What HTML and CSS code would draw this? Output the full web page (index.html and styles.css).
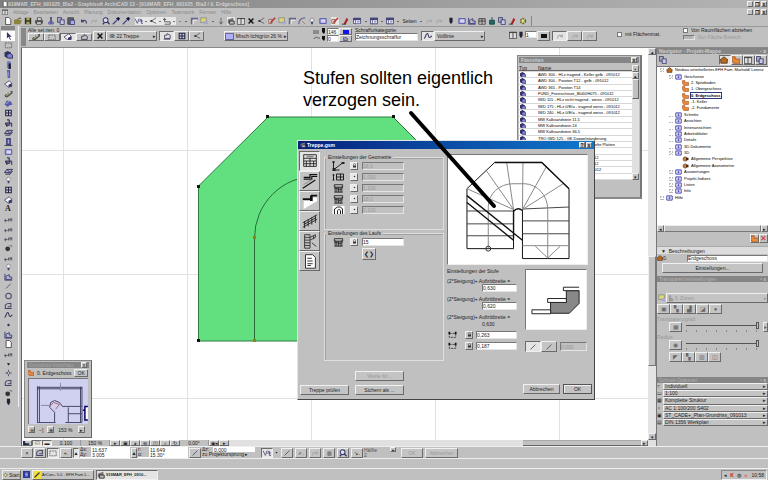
FILE: index.html
```html
<!DOCTYPE html>
<html lang="de">
<head>
<meta charset="utf-8">
<title>ArchiCAD</title>
<link rel="stylesheet" href="styles.css">
</head>
<body>
<svg class="sprite" aria-hidden="true">
<symbol id="new" viewBox="0 0 10 10"><path d="M2 .5h4l2.500 2.500v6.500H2z" fill="#fff" stroke="#333"/></symbol>
<symbol id="open" viewBox="0 0 10 10"><path d="M0 3h3l1-1h3v2h3L8 9H0z" fill="#8a8440"/><path d="M6 1l3 1" stroke="#333"/></symbol>
<symbol id="save" viewBox="0 0 10 10"><path d="M1 1h8v8H1z" fill="#33351c"/><path d="M3 1h4v3H3zM3 6h4v3H3z" fill="#aaa86a"/></symbol>
<symbol id="print" viewBox="0 0 10 10"><path d="M3 1h5v3H3z" fill="#fff" stroke="#333"/><path d="M0 4h10v4H0z" fill="#555"/><path d="M2 6h6v3H2z" fill="#eee" stroke="#333"/></symbol>
<symbol id="cut" viewBox="0 0 10 10"><path d="M4 0l2 6M6 0L4 6" stroke="#335" fill="none"/><circle cx="3.500" cy="7.500" r="1.500" fill="none" stroke="#339"/><circle cx="6.500" cy="7.500" r="1.500" fill="none" stroke="#339"/></symbol>
<symbol id="copy" viewBox="0 0 10 10"><path d="M.5.500h5v6h-5z" fill="#aab" stroke="#336"/><path d="M4 3.500h5v6H4z" fill="#c8c8e8" stroke="#336"/></symbol>
<symbol id="paste" viewBox="0 0 10 10"><path d="M1 1h7v8H1z" fill="#667" stroke="#333"/><path d="M4 4h5.500v5.500H4z" fill="#aae" stroke="#336"/></symbol>
<symbol id="undo" viewBox="0 0 10 10"><path d="M2 3v3h3M2 6c2-3 6-3 6 2" fill="none" stroke="#336" stroke-width="1.300"/></symbol>
<symbol id="redo" viewBox="0 0 10 10"><path d="M8 3v3H5M8 6C6 3 2 3 2 8" fill="none" stroke="#a8a8a8" stroke-width="1.300"/></symbol>
<symbol id="lens" viewBox="0 0 10 10"><circle cx="4.500" cy="4" r="3" fill="#dde" stroke="#336" stroke-width="1.300"/><path d="M6.500 6l3 3M1 9l2-2" stroke="#336" stroke-width="1.600"/></symbol>
<symbol id="pick" viewBox="0 0 10 10"><path d="M1 9l5-5" stroke="#448" stroke-width="1.600"/><path d="M5 2l3 3 2-3-2-2z" fill="#114"/></symbol>
<symbol id="brush" viewBox="0 0 10 10"><path d="M0 0h10v10H0z" fill="#f0e040"/><path d="M2 8l6-6" stroke="#223" stroke-width="1.600"/></symbol>
<symbol id="snap" viewBox="0 0 10 10"><path d="M0 2l3 6 2-6M5 5h5M6 3h2v5h2" fill="none" stroke="#447"/></symbol>
<symbol id="net" viewBox="0 0 10 10"><path d="M9 1L3 5l6 3M1 5h3" fill="none" stroke="#555"/><circle cx="3" cy="5" r="1.200" fill="#333"/></symbol>
<symbol id="ruler" viewBox="0 0 10 10"><path d="M2 1v5h7v3H2M0 3h4" fill="none" stroke="#444"/></symbol>
<symbol id="caret" viewBox="0 0 10 10"><path d="M3 4h4L5 7z" fill="#111"/></symbol>
<symbol id="corner" viewBox="0 0 10 10"><path d="M2 9V2h8" fill="none" stroke="#668" stroke-width="2"/><path d="M4 9V4h5" fill="none" stroke="#fff"/></symbol>
<symbol id="layer" viewBox="0 0 10 10"><path d="M1 1h7v6H1z" fill="#ddd86a" stroke="#888"/><path d="M5 5h5v4H5z" fill="#aac"/></symbol>
<symbol id="down" viewBox="0 0 10 10"><path d="M5 1v7M3 6l2 3 2-3" fill="none" stroke="#555"/></symbol>
<symbol id="stack" viewBox="0 0 10 10"><path d="M1 3l7-2v5l-7 2z" fill="#777"/><path d="M3 5h6v4H3z" fill="#bbb" stroke="#222"/></symbol>
<symbol id="table" viewBox="0 0 10 10"><path d="M.5 1.500h9v8h-9z" fill="#ddd" stroke="#444"/><path d="M0 2h10M5 2v7" stroke="#333"/></symbol>
<symbol id="cross" viewBox="0 0 10 10"><path d="M2 2l6 6M8 2L2 8" stroke="#111" stroke-width="1.800"/></symbol>
<symbol id="arc" viewBox="0 0 10 10"><path d="M1 9c0-5 3-8 8-8" fill="none" stroke="#669" stroke-width="1.500"/><path d="M5 5l4 4" stroke="#a66"/></symbol>
<symbol id="red" viewBox="0 0 10 10"><path d="M1 3h4v5H1z" fill="#eed" stroke="#855"/><path d="M3 7l6-6" stroke="#b33" stroke-width="2"/></symbol>
<symbol id="pen" viewBox="0 0 10 10"><path d="M3 9l4-8 2 2-3 6z" fill="#a22"/><path d="M1 9h5" stroke="#333"/></symbol>
<symbol id="win" viewBox="0 0 10 10"><path d="M.5 1.500h9v7h-9z" fill="#eef" stroke="#336"/><path d="M0 1h10v3H0z" fill="#447"/><path d="M3 4v5M5 6h3" stroke="#558"/></symbol>
<symbol id="plan" viewBox="0 0 10 10"><path d="M1 2h8v6H1z" fill="#aad" stroke="#44a"/><path d="M3 4h5M3 6h5" stroke="#fff"/></symbol>
<symbol id="word" viewBox="0 0 10 10"><path d="M0 0h10v10H0z" fill="#2838a0"/><path d="M3 3h4M3 5h4M3 7h4" stroke="#dde"/></symbol>
<symbol id="dark" viewBox="0 0 10 10"><path d="M3 1h4v5L5 9 3 6z" fill="#223"/></symbol>
<symbol id="tree" viewBox="0 0 10 10"><path d="M5 0v4M2 4h6v5H2z" fill="#266" stroke="#144"/></symbol>
<symbol id="gear" viewBox="0 0 10 10"><circle cx="5" cy="5" r="3" fill="#dd8" stroke="#663" stroke-width="2" stroke-dasharray="2 1"/></symbol>
<symbol id="cursor" viewBox="0 0 10 10"><path d="M3 0v8l2-2 2 4 1-1-2-3h3z" fill="#336"/></symbol>
<symbol id="marq" viewBox="0 0 10 10"><path d="M1 2.500h8v6H1z" fill="none" stroke="#555" stroke-dasharray="2 1"/></symbol>
<symbol id="wall" viewBox="0 0 10 10"><path d="M0 2l4-2 4 2v5l-4 2-4-2z" fill="#336"/><path d="M3 4l4-1 3 2v4H5L3 8z" fill="#8080d8" stroke="#224"/></symbol>
<symbol id="column" viewBox="0 0 10 10"><path d="M3 1l2-1 3 1v8H3z" fill="#7878c8"/><path d="M5 3h3v7H5z" fill="#223"/></symbol>
<symbol id="beam" viewBox="0 0 10 10"><path d="M3 0h4v10H4z" fill="#5858b0"/><path d="M4 2h1v6H4z" fill="#aae"/></symbol>
<symbol id="slab" viewBox="0 0 10 10"><path d="M0 5l6-4 3 3v4L5 9z" fill="#f4f4ff" stroke="#445"/><path d="M5 6l4-2v4L5 9z" fill="#336"/></symbol>
<symbol id="stair" viewBox="0 0 10 10"><path d="M0 7l2-2h2V3l3 1V2l3-1v3L4 9H1z" fill="#554"/><path d="M2 7l6-4" stroke="#ddd"/></symbol>
<symbol id="roof" viewBox="0 0 10 10"><path d="M0 7l3-5 5 1 2 4-4 1-2 2z" fill="#5858a8"/><path d="M2 6l4-3" stroke="#bbe"/></symbol>
<symbol id="window" viewBox="0 0 10 10"><path d="M1.500 1.500h7v7h-7zM5 1v8M1 5h8" fill="#ccd" stroke="#224" stroke-width="1.300"/></symbol>
<symbol id="chair" viewBox="0 0 10 10"><path d="M3 1h3v4h3v5M3 5v5M1 5h5v3H2z" fill="#88b" stroke="#223"/></symbol>
<symbol id="mesh" viewBox="0 0 10 10"><path d="M0 7l3-4h7L7 7zM3 3l4 4M1 9h6l3-4" fill="#aac" stroke="#224"/></symbol>
<symbol id="door" viewBox="0 0 10 10"><path d="M2 0h6v9H2z" fill="#447"/><path d="M4 2h2v5H4z" fill="#aad"/><path d="M0 9.500h10" stroke="#224"/></symbol>
<symbol id="lamp" viewBox="0 0 10 10"><circle cx="5" cy="4" r="2.500" fill="#eef" stroke="#888"/><path d="M5 6v3" stroke="#336" stroke-width="2"/></symbol>
<symbol id="dim" viewBox="0 0 10 10"><path d="M0 7h4M1 5v4M5 5h4M5 5v3M7 5v3M9 4v4" stroke="#445"/></symbol>
<symbol id="ball" viewBox="0 0 10 10"><circle cx="4" cy="6" r="3" fill="#333"/><path d="M6 2h3v2" fill="none" stroke="#669"/></symbol>
<symbol id="fill" viewBox="0 0 10 10"><path d="M.5 1v8h9M2 8V4l4-2v3h3v3z" fill="#aae" stroke="#336"/></symbol>
<symbol id="line" viewBox="0 0 10 10"><path d="M2 8l6-6" stroke="#446"/></symbol>
<symbol id="circle" viewBox="0 0 10 10"><circle cx="5" cy="5" r="3.500" fill="none" stroke="#446" stroke-width="1.300"/></symbol>
<symbol id="poly" viewBox="0 0 10 10"><path d="M9 8H1V4c2-3 4-2 7-2v4H4" fill="none" stroke="#446" stroke-width="1.300"/></symbol>
<symbol id="spline" viewBox="0 0 10 10"><path d="M0 8c2 0 2-6 4-6s1 5 3 5 1-2 3-2" fill="none" stroke="#335" stroke-width="1.300"/></symbol>
<symbol id="dot" viewBox="0 0 10 10"><circle cx="5" cy="5" r="1.500" fill="#335"/></symbol>
<symbol id="spark" viewBox="0 0 10 10"><path d="M5 1v8M1 5h8" stroke="#446"/><circle cx="5" cy="5" r="1.500" fill="#eef" stroke="#446"/></symbol>
<symbol id="house" viewBox="0 0 10 10"><path d="M0 5l5-4 5 4H9v4H1V5z" fill="#b56a1c" stroke="#532"/></symbol>
<symbol id="folder" viewBox="0 0 10 10"><path d="M0 1h4v3h6v5H2L0 6z" fill="#e88a3c" stroke="#a3501c"/></symbol>
<symbol id="view" viewBox="0 0 10 10"><path d="M.5 1.500h9v7h-9z" fill="#fff" stroke="#33a" stroke-width="1.500"/><path d="M3 3.500h4M3 6h4M5 3v4" stroke="#33a"/></symbol>
<symbol id="cam" viewBox="0 0 10 10"><circle cx="4.500" cy="5" r="3.500" fill="#c8843c" stroke="#421"/><path d="M6 3h4v4H6z" fill="#421"/></symbol>
<symbol id="gstair" viewBox="0 0 10 10"><path d="M1 2h8v7H1zM5 2v7M1 4h8M1 6h8" fill="#ddd" stroke="#333"/></symbol>
<symbol id="rstair" viewBox="0 0 10 10"><path d="M1 9h8M2 8V4h3V2l4 2v4z" fill="none" stroke="#335"/></symbol>
<symbol id="lock" viewBox="0 0 10 10"><path d="M3 5V3c0-3 4-3 4 0v2" fill="none" stroke="#333"/><path d="M2 5h6v4H2z" fill="#333"/></symbol>
<symbol id="handle" viewBox="0 0 12 10"><path d="M2 3h8v5H2z" fill="none" stroke="#333" stroke-dasharray="3 1"/><path d="M1 1h2v3H1zM9 1h2v3H9z" fill="#111"/></symbol>
<symbol id="steps" viewBox="0 0 12 12"><path d="M1 2h10v3H1zM2 4v7M4 5v6M6 5v6M8 5v6M10 4v7M1 7c3-2 6 3 10-1M1 11h10" fill="none" stroke="#222"/></symbol>
<symbol id="dimline" viewBox="0 0 12 10"><path d="M1 1v8M1 9h6M2 8l8-6" fill="none" stroke="#222"/><path d="M0 7h3v3H0zM0 0h2v2H0zM9 1h3v2H9z" fill="#222"/></symbol>
<symbol id="gridstep" viewBox="0 0 12 10"><path d="M1 2v6M0 3h2M0 8h2M4 2h7v6H4zM8 2v6M4 5h7" fill="none" stroke="#222"/></symbol>
<symbol id="turn" viewBox="0 0 12 10"><path d="M0 1h12v8H0z" fill="#fff"/><path d="M2 9V4l3-2h3l2 2v5M5 9V6c0-2 3-2 3 0v3" fill="none" stroke="#222"/></symbol>
</svg>

<div class="app">
  <header class="title"><svg class="i"><use href="#new"/></svg><b>919MAR_EFH_091025_Bla2 - Graphisoft ArchiCAD 13 - [919MAR_EFH_091025_Bla2 / 0. Erdgeschoss]</b><span class="caps"><button>_</button><button>❐</button><button>x</button></span></header>
  <nav class="menu"><svg class="i"><use href="#table"/></svg><a href="#">Ablage</a><a href="#">Bearbeiten</a><a href="#">Ansicht</a><a href="#">Planung</a><a href="#">Dokumentation</a><a href="#">Optionen</a><a href="#">Teamwork</a><a href="#">Fenster</a><a href="#">Hilfe</a><span class="caps"><button>_</button><button>❐</button><button>x</button></span></nav>
  <div class="tools">
    <svg class="i"><use href="#new"/></svg><svg class="i"><use href="#open"/></svg><svg class="i"><use href="#save"/></svg><svg class="i"><use href="#print"/></svg><i></i><svg class="i"><use href="#cut"/></svg><svg class="i"><use href="#copy"/></svg><svg class="i"><use href="#paste"/></svg><i></i><svg class="i"><use href="#undo"/></svg><svg class="i"><use href="#redo"/></svg><i></i><svg class="i"><use href="#lens"/></svg><svg class="i"><use href="#pick"/></svg><svg class="i"><use href="#pick"/></svg><i></i>
    <span class="lit"><svg class="i"><use href="#snap"/></svg><svg class="c"><use href="#caret"/></svg><svg class="i"><use href="#net"/></svg><svg class="c"><use href="#caret"/></svg><svg class="i"><use href="#ruler"/></svg><svg class="c"><use href="#caret"/></svg></span>
    <svg class="c"><use href="#dot"/></svg><svg class="c"><use href="#caret"/></svg><svg class="i"><use href="#corner"/></svg><svg class="i"><use href="#layer"/></svg><svg class="c"><use href="#caret"/></svg><svg class="i"><use href="#down"/></svg><svg class="i lit"><use href="#stack"/></svg><svg class="i lit"><use href="#table"/></svg><svg class="i"><use href="#cross"/></svg><svg class="i"><use href="#net"/></svg><svg class="i"><use href="#red"/></svg><svg class="i"><use href="#layer"/></svg><svg class="i"><use href="#corner"/></svg><svg class="i"><use href="#arc"/></svg><svg class="i"><use href="#lamp"/></svg><svg class="i"><use href="#plan"/></svg><i></i><svg class="i lit"><use href="#red"/></svg><svg class="i"><use href="#pen"/></svg><i></i>
    <svg class="i lit"><use href="#win"/></svg><svg class="c"><use href="#caret"/></svg><svg class="i"><use href="#win"/></svg><svg class="c"><use href="#caret"/></svg><svg class="i"><use href="#win"/></svg><svg class="c"><use href="#caret"/></svg><span>Seiten</span><svg class="c"><use href="#caret"/></svg><svg class="i"><use href="#redo"/></svg><svg class="i"><use href="#redo"/></svg><i></i><svg class="i"><use href="#dark"/></svg><svg class="i"><use href="#plan"/></svg><svg class="i"><use href="#fill"/></svg><svg class="i"><use href="#gstair"/></svg><svg class="i"><use href="#tree"/></svg><svg class="i"><use href="#copy"/></svg><svg class="i"><use href="#pen"/></svg><svg class="i"><use href="#gear"/></svg>
  </div>

  <div class="body">
    <aside class="toolbox">
      <div class="grip"></div>
      <button class="on"><svg><use href="#cursor"/></svg></button><button><svg><use href="#marq"/></svg></button><button><svg><use href="#wall"/></svg></button><button><svg><use href="#column"/></svg></button><button><svg><use href="#beam"/></svg></button><button><svg><use href="#slab"/></svg></button><button><svg><use href="#stair"/></svg></button><button><svg><use href="#roof"/></svg></button><button><svg><use href="#window"/></svg></button><button><svg><use href="#chair"/></svg></button><button><svg><use href="#mesh"/></svg></button><button><svg><use href="#door"/></svg></button><button><svg><use href="#plan"/></svg></button><button><svg><use href="#chair"/></svg></button><button><svg><use href="#mesh"/></svg></button><button><svg><use href="#lamp"/></svg></button><button><svg><use href="#window"/></svg></button><button><svg><use href="#slab"/></svg></button><button><b>A</b></button><button><svg><use href="#dim"/></svg></button><button><svg><use href="#dim"/></svg></button><button><svg><use href="#dim"/></svg></button><button><svg><use href="#ball"/></svg></button><button><svg><use href="#dim"/></svg></button><button><svg><use href="#lamp"/></svg></button><button><svg><use href="#fill"/></svg></button><button><svg><use href="#line"/></svg></button><button><svg><use href="#circle"/></svg></button><button><svg><use href="#poly"/></svg></button><button><svg><use href="#spline"/></svg></button><button><svg><use href="#dot"/></svg></button><button><svg><use href="#fill"/></svg></button><button><svg><use href="#new"/></svg></button><button><svg><use href="#dim"/></svg></button><button><svg><use href="#caret"/></svg></button><button><svg><use href="#spark"/></svg></button><button><svg><use href="#poly"/></svg></button><button><svg><use href="#ball"/></svg></button><button><svg><use href="#dark"/></svg></button>
    </aside>

    <div class="right">
      <div class="info">
        <div class="grip"></div>
        <div class="col sel"><label>Alle sel.rien: 0</label><div class="row"><button><svg class="i"><use href="#stair"/></svg></button><button><svg class="i"><use href="#marq"/></svg></button><button class="on"><svg class="i"><use href="#slab"/></svg></button><button><svg class="i"><use href="#rstair"/></svg></button></div></div>
        <div class="row low layerpick"><button class="sq"><svg class="i"><use href="#cross"/></svg></button><button class="wide">👁 22 Treppe<span>▸</span></button></div>
        <div class="row low"><button class="on"><svg class="i"><use href="#rstair"/></svg></button><button><svg class="i"><use href="#window"/></svg></button><button><svg class="i"><use href="#net"/></svg></button></div>
        <div class="row low mat"><button class="wide"><i class="sw"></i>Misch lichtgrün 26 %<span>▸</span></button></div>
        <div class="pens"><svg viewBox="0 0 14 14"><path d="M0 3h6M0 5h6M1 11c2-4 4 0 6-1" stroke="#555" fill="none"/><path d="M9 0h3v4l-1 2-2-2zM9 8h3v3l-1 2-2-2z" fill="#111"/></svg><div class="col"><input aria-label="Stift" value="146"><input aria-label="Hintergrundstift" value="0"></div><div class="col"><button><i class="blue"></i></button><button><svg class="c"><use href="#fill"/></svg></button></div></div>
        <div class="col cat"><label for="cat">Schraffurkategorie:</label><select id="cat"><option>Zeichnungsschraffur</option></select></div>
        <div class="row low linet"><button class="on small"><svg class="i"><use href="#spline"/></svg></button><button class="wide">Volllinie<span>▸</span></button></div>
        <div class="row low lw"><svg class="i"><use href="#table"/></svg><svg class="i"><use href="#dark"/></svg><input aria-label="Stift" value="1"><button class="small"><i class="black"></i></button></div>
        <div class="row low off"><button class="on"><svg class="i"><use href="#redo"/></svg></button><button><svg class="i"><use href="#redo"/></svg></button><button><svg class="i"><use href="#redo"/></svg></button></div>
        <label class="chk flach"><input type="checkbox">mit Flächenmat.</label>
        <div class="col zone"><label class="chk"><input type="checkbox">Von Raumflächen abziehen</label><label class="chk dim"><input disabled value="100">Nur Fläche Bereich</label></div>
      </div>

      <div class="work">
        <main class="canvas">
          <svg class="drawing" viewBox="22 48 627 392" width="627" height="392">
            <path d="M63.500 48v392M187.500 48v392M311.500 48v392M435.500 48v392M559.500 48v392M22 150.500h627M22 274.500h627M22 398.500h627" stroke="#e2e2e2"/>
            <path d="M198.500 186L268 117h125l69 69v155H198.500z" fill="#62e080" stroke="#2f7a40"/>
            <path d="M254.500 341V238a62 62 0 0 1 62-62" fill="none" stroke="#2c6b38"/>
            <path d="M197 185h3v3h-3zM266 115h3v3h-3zM392 115h3v3h-3zM197 339h3v3h-3z" fill="#111"/>
            <path d="M253 236h3v3h-3zM253 339h3v3h-3z" fill="#8a8410"/>
          </svg>
        </main>
        <div class="vscroll"><button>▴</button><div class="thumb"></div><button>▾</button></div>
        <div class="zoombar"><div class="zb"><button>▙▖</button><button class="on">◱</button><button class="on">▬</button><span class="n">0.100</span><span class="n">150 %</span><button>▸</button><button>▣</button><button>◕</button><button>⊖</button><button>◫</button><button>⌕</button><button>↻</button><span class="n">0,00°</span><button>◉◂</button><button>▸</button></div><div class="hs"><div class="hthumb"></div><button>▸</button></div></div>
      </div>
    </div>

    <aside class="navi">
      <h2><span>Navigator - Projekt-Mappe</span><em>▫ x</em></h2>
      <div class="tabs"><svg class="i"><use href="#copy"/></svg><button class="on"><svg class="i"><use href="#house"/></svg></button><button><svg class="i"><use href="#folder"/></svg></button><button><svg class="i"><use href="#table"/></svg></button><button><svg class="i"><use href="#copy"/></svg></button></div>
      <div class="treebox">
        <ul class="tree">
          <li><s>−</s><svg><use href="#house"/></svg>Neubau unterkellertes EFH Fam. Marhold/ Lorenz</li>
          <li class="l1"><s>−</s><svg><use href="#view"/></svg>Geschosse</li>
          <li class="l2"><svg><use href="#folder"/></svg>2. Spitzboden</li>
          <li class="l2"><svg><use href="#folder"/></svg>1. Obergeschoss</li>
          <li class="l2"><svg><use href="#folder"/></svg><b>0. Erdgeschoss</b></li>
          <li class="l2"><svg><use href="#folder"/></svg>-1. Keller</li>
          <li class="l2"><svg><use href="#folder"/></svg>-2. Fundamente</li>
          <li class="l1"><s></s><svg><use href="#view"/></svg>Schnitte</li>
          <li class="l1"><s></s><svg><use href="#view"/></svg>Ansichten</li>
          <li class="l1"><s></s><svg><use href="#view"/></svg>Innenansichten</li>
          <li class="l1"><s></s><svg><use href="#view"/></svg>Arbeitsblätter</li>
          <li class="l1"><s></s><svg><use href="#view"/></svg>Details</li>
          <li class="l1"><s></s><svg><use href="#view"/></svg>3D-Dokumente</li>
          <li class="l1"><s>−</s><svg><use href="#view"/></svg>3D</li>
          <li class="l2"><svg><use href="#cam"/></svg>Allgemeine Perspektive</li>
          <li class="l2"><svg><use href="#cam"/></svg>Allgemeine Axonometrie</li>
          <li class="l1"><s>+</s><svg><use href="#view"/></svg>Auswertungen</li>
          <li class="l1"><s>+</s><svg><use href="#view"/></svg>Projekt-Indizes</li>
          <li class="l1"><s>+</s><svg><use href="#view"/></svg>Listen</li>
          <li class="l1"><s>+</s><svg><use href="#view"/></svg>Info</li>
          <li><s>+</s><svg><use href="#view"/></svg>Hilfe</li>
        </ul>
      </div>
      <div class="nscroll"><button>◂</button><div></div><button>▸</button></div>
      <div class="acts"><button><svg class="i"><use href="#folder"/></svg></button><button class="del">✕</button></div>
      <div class="desc">▼&nbsp; Beschreibungen</div>
      <div class="field"><label for="ge"><svg class="i"><use href="#house"/></svg>0.</label><input id="ge" value="Erdgeschoss"></div>
      <button class="settings">Einstellungen...</button>
      <h2 class="faint"><span>Transparenzeinstellungen</span><em>▫ x</em></h2>
      <div class="sun">
        <div class="row"><button class="flat"><svg class="i"><use href="#layer"/></svg></button><button class="wide dimt">▙ 3. Zonen<span>▸</span></button></div>
        <div class="row five"><button>▣</button><button>▚</button><button>▟</button><button>◪</button><button>●</button></div>
        <label for="s1">Transparenzgrad:</label>
        <div class="row sl"><button>▦</button><input id="s1" type="range" value="100"><button class="nar">▸</button></div>
        <label for="s2">Radius:</label>
        <div class="row sl"><button>◉</button><input id="s2" type="range" value="100"><span class="nar"></span></div>
        <div class="row four"><button>◤</button><button>▚</button><button>▥</button><button>◫</button></div>
      </div>
      <h2 class="faint"><span>Schnell-Optionen</span><em>▫ x</em></h2>
      <ul class="quick">
        <li>⌗<button>Individuell<span>▸</span></button></li>
        <li>▭<button>1:100<span>▸</span></button></li>
        <li>▦<button>Komplette Struktur<span>▸</span></button></li>
        <li>♆<button>AC 1:100/200 S402<span>▸</span></button></li>
        <li>▣<button>ST_CADE+_Plan-Grundriss_091013<span>▸</span></button></li>
        <li>▤<button>DIN 1356 Werkplan<span>▸</span></button></li>
      </ul>
    </aside>
  </div>

  <div class="coords">
    <button>×</button><button><svg class="i"><use href="#poly"/></svg></button><button class="on"><svg class="i"><use href="#marq"/></svg></button><button>+.</button>
    <button class="on sm">▲</button><div class="xy"><label>Δx: <input value="11,637"></label><label>Δy: <input value="3,005"></label></div>
    <button class="sm">▲</button><div class="xy"><label>r: <input value="11,649"></label><label>α: <input value="15,30°"></label></div>
    <button><svg class="i"><use href="#line"/></svg></button><div class="xy org"><label>Δz: <input value="0,000"></label><span>zu Projektursprung ▸</span></div>
    <button class="on"><svg class="i"><use href="#snap"/></svg></button><svg class="c"><use href="#caret"/></svg><button><svg class="i"><use href="#line"/></svg></button><button>✓.</button><button><svg class="i"><use href="#redo"/></svg></button><button>▥</button><button><svg class="i"><use href="#lens"/></svg></button><button>↘.</button><span class="half">Hälfte<br>2</span><button class="tiny">▸</button><button class="lab" disabled>OK</button><button class="lab2" disabled>Abbrechen</button>
  </div>
  <div class="status"></div>
  <footer class="task"><button class="start"><svg class="i"><use href="#gear"/></svg>Start</button><svg class="i q"><use href="#word"/></svg><button class="t"><svg class="i"><use href="#brush"/></svg>ArCon+ 5.0 - EFH Fam.1...</button><button class="t on"><svg class="i"><use href="#stack"/></svg><b>919MAR_EFH_0910...</b></button><div class="tray">◂ <b>K</b> ◍ <u>▰</u> 10:58</div></footer>
</div>

<section class="fav">
  <h2><span>Favoriten</span><button>x</button></h2>
  <div class="list">
    <table>
      <thead><tr><th>Typ</th><th>Name</th></tr></thead>
      <tbody>
        <tr><td><svg><use href="#wall"/></svg></td><td>AWD 300 - HLz tragend - Keller gelb - 091012</td></tr>
        <tr><td><svg><use href="#wall"/></svg></td><td>AWD 300 - Poroton T12 - gelb - 091012</td></tr>
        <tr><td><svg><use href="#wall"/></svg></td><td>AWD 365 - Poroton T14</td></tr>
        <tr><td><svg><use href="#wall"/></svg></td><td>FUND_Frostschürze_B040/H075 - 091012</td></tr>
        <tr><td><svg><use href="#wall"/></svg></td><td>IWD 115 - HLz nicht tragend - weiss - 091012</td></tr>
        <tr><td><svg><use href="#wall"/></svg></td><td>IWD 175 - HLz 0/E/a - tragend weiss - 091012</td></tr>
        <tr><td><svg><use href="#wall"/></svg></td><td>IWD 240 - HLz 0/E/a - tragend weiss - 091012</td></tr>
        <tr><td><svg><use href="#wall"/></svg></td><td>MW Kalksandstein 11,5</td></tr>
        <tr><td><svg><use href="#wall"/></svg></td><td>MW Kalksandstein 24</td></tr>
        <tr><td><svg><use href="#wall"/></svg></td><td>MW Kalksandstein 36,5</td></tr>
        <tr><td><svg><use href="#wall"/></svg></td><td>TRO IWD 125 - GK Doppelständerung</td></tr>
        <tr><td><svg><use href="#wall"/></svg></td><td>TRO IWD 150 - GK Wand, doppelte Platten</td></tr>
        <tr><td><svg><use href="#wall"/></svg></td><td>TRO IWD 175</td></tr>
        <tr><td><svg><use href="#wall"/></svg></td><td>ZM Decke 200 - Rohbau - 091012</td></tr>
        <tr><td><svg><use href="#wall"/></svg></td><td>ZM Decke 220 - Rohbau - 091012</td></tr>
        <tr><td><svg><use href="#wall"/></svg></td><td>ZM Bodenplatte 250 - WU - 091012</td></tr>
        <tr><td><svg><use href="#wall"/></svg></td><td>ZM Bodenplatte 300 - 091012</td></tr>
      </tbody>
    </table>
    <div class="fscroll"><button>▪</button><button>▴</button><div></div><button>▾</button></div>
  </div>
</section>

<section class="mini">
  <h2><span>Grundriss-Vorschau</span><button>x</button></h2>
  <div class="row mh"><svg class="i"><use href="#folder"/></svg><span>0. Erdgeschoss</span><button>OK</button></div>
  <svg class="mp" viewBox="0 0 60 46"><path d="M0 0h60v46H0z" fill="#d0d0f0"/><path d="M8.500 7.500v37M10.500 7.500v37M8 8.500h46M8 10h46M52.500 8v36M54 8v36M8 44.500h19M37 44.500h17M26 44v-10l-5-5 1-5 4-2 5 2 3 4h20M40 29v15M40 35.500h14" fill="none" stroke="#446"/><path d="M32 4v8M12 27h10" stroke="#88a"/><path d="M21 28l4-4 6 2-4 5" fill="none" stroke="#a66"/><path d="M60 28h-3v14h3M55 32h2" fill="#fff" stroke="#006" stroke-width="1.500"/></svg>
  <div class="row mf"><button>⊖</button><span>−]</span><button>⊕</button><span>153 %</span><button>▸</button></div>
</section>

<section class="dialog" role="dialog" aria-label="Treppe.gsm">
  <h1><svg class="i"><use href="#stack"/></svg><span>Treppe.gsm</span><button>?</button><button>x</button></h1>
  <div class="dbody">
    <div class="dtabs">
      <button class="on"><svg viewBox="0 0 20 20"><path d="M3 3h14v13H3zM3 7h14M3 10h14M3 13h14M10 7v9M6 10v6M14 10v6" fill="none" stroke="#222"/><path d="M6 4h8v2H6z" fill="#888"/></svg></button>
      <button><svg viewBox="0 0 20 20"><path d="M3 6h7V3h8M3 8h9V5h6M2 18L16 9" fill="none" stroke="#111" stroke-width="1.300"/><path d="M3 14l10-6" stroke="#888"/></svg></button>
      <button><svg viewBox="0 0 20 20"><path d="M3 10h8v-4h7v4L3 19z" fill="#fff"/><path d="M2 7h9v2H2zM11 3h7v2h-7zM10 4h3v6h-3z" fill="#111"/></svg></button>
      <button><svg viewBox="0 0 20 20"><path d="M2 12L18 3M2 17L18 8M4 10v8M8 8v8M12 6v8M16 4v8M3 14l14-8" fill="none" stroke="#222"/></svg></button>
      <button><svg viewBox="0 0 20 20"><path d="M4 18V3h6v15zM4 6h6M4 9h6M4 12h6M4 15h6M10 6l6-3v3l-6 3M12 12l5 4M14 4v4" fill="none" stroke="#333"/></svg></button>
      <button><svg viewBox="0 0 20 20"><path d="M5 3h8l3 3v12H5z" fill="#fff" stroke="#222"/><path d="M7 7h5M7 10h6M7 13h6M7 15h4" stroke="#222"/></svg></button>
    </div>
    <div class="groups">
      <fieldset class="geo"><legend>Einstellungen der Geometrie</legend>
        <div><svg><use href="#dimline"/></svg><button><svg><use href="#lock"/></svg></button><input aria-label="Länge" disabled value="18,0"></div>
        <div><svg><use href="#gridstep"/></svg><button><svg><use href="#dot"/></svg></button><input aria-label="Breite" disabled value="1,000"></div>
        <div><svg><use href="#steps"/></svg><button><svg><use href="#dot"/></svg></button><input aria-label="Lauf" disabled value="1,100"></div>
        <div><svg><use href="#steps"/></svg><button><svg><use href="#dot"/></svg></button><input aria-label="Höhe" disabled value="18,0"></div>
        <div><svg><use href="#turn"/></svg><button><svg><use href="#dot"/></svg></button><input aria-label="Radius" disabled value="0,100"></div>
      </fieldset>
      <fieldset class="lauf"><legend>Einstellungen des Laufs</legend>
        <div><svg><use href="#steps"/></svg><button class="up"><svg><use href="#lock"/></svg></button><input aria-label="Stufen" value="15"></div>
        <button class="lr">❮❯</button>
      </fieldset>
      <div class="bl"><button class="w" disabled>Werte für...</button><button>Treppe prüfen</button><button>Sichern als ...</button></div>
    </div>
    <div class="dright">
      <svg class="preview" viewBox="447 156 140 110">
        <g fill="none" stroke="#333">
        <path d="M466 250.500V190l28-26.500h47.500L569 190v70.500h-47V211M513 211v39.500h-47" stroke="#111"/>
        <path d="M466 212.500h47M466 225.500h47M466 237.500h47M522 222.500h47M522 235.500h47M522 210.500l47-2" stroke="#444"/>
        <path d="M513 211l-47-21M513 211l-28-40M513 211l-7-48M522 211l.5-47M522 211l24-43M522 211l41-26M522 247.500h47" stroke="#888"/>
        <path d="M487.500 250v-42a25 23 0 0 1 25-23h12a24 26 0 0 1 23 26v49M535 248l12.500 12 12.500-12" stroke="#888"/>
        <circle cx="487.500" cy="250.500" r="2.500"/>
        <path d="M466 197l56 45M466 204l47 38M513 213q4-5 9-1M494 163.500h47.500L569 190M513 213v27" stroke="#111" stroke-width="1.400"/>
        </g>
      </svg>
      <div class="lower">
        <div class="step">
          <span class="hd">Einstellungen der Stufe</span>
          <label>(2*Steigung)+ Auftrittbreite =<input value="0,630"></label>
          <label>(2*Steigung)+ Auftrittbreite =<input value="0,620"></label>
          <label>(2*Steigung)+ Auftrittbreite =<output>0,630</output></label>
          <div class="sr"><svg><use href="#handle"/></svg><button><svg><use href="#lock"/></svg></button><input aria-label="Auftritt" value="0,263"></div>
          <div class="sr"><svg><use href="#handle"/></svg><button><svg><use href="#lock"/></svg></button><input aria-label="Steigung" value="0,187"></div>
        </div>
        <div class="sp">
          <svg class="spic" viewBox="526 271 61 60"><path d="M551 315v-11h16v-12h13v13l-10 10z" fill="#888" stroke="#222"/><path d="M532 311.500h19v4h-19zM548 300h19v4h-19zM580 288.500h-16v3.500h16" fill="#fff" stroke="#222"/></svg>
          <div class="row"><button class="on"><svg class="i"><use href="#line"/></svg></button><button><svg class="i"><use href="#line"/></svg></button><input aria-label="Überstand" disabled value="0,000"></div>
        </div>
      </div>
      <div class="br"><button>Abbrechen</button><button class="ok">OK</button></div>
    </div>
  </div>
</section>

<p class="note">Stufen sollten eigentlich<br>verzogen sein.</p>
<svg class="arrow" viewBox="0 0 90 102"><path d="M4 4l83 93" stroke="#000" stroke-width="4" stroke-linecap="round"/></svg>
</body>
</html>
```
FILE: styles.css
```css
* { box-sizing: border-box; }
html, body { height: 100%; }
body {
  margin: 0;
  position: relative;
  overflow: hidden;
  background: #c0c0c0;
  color: #222;
  font: 5px/6px "Liberation Sans", Arial, sans-serif;
}
button, input, select { font: inherit; color: inherit; margin: 0; padding: 0; border-radius: 0; min-width: 0; }
button {
  display: inline-flex; align-items: center; justify-content: center;
  overflow: hidden; white-space: nowrap;
  background: #c4c4c4;
  border: 1px solid; border-color: #f0f0f0 #6a6a6a #6a6a6a #f0f0f0;
}
button.on { background: #e4e4e4; border-color: #6a6a6a #f0f0f0 #f0f0f0 #6a6a6a; }
button:disabled { color: #999; }
input, select { background: #fff; border: 1px solid; border-color: #777 #e4e4e4 #e4e4e4 #777; appearance: none; }
input:disabled { background: #c0c0c0; color: #999; }
h1, h2, ul, p { margin: 0; padding: 0; font-size: 5px; font-weight: normal; }
ul { list-style: none; }
svg { flex: none; display: block; }
.sprite { position: absolute; width: 0; height: 0; }
.i { width: 8px; height: 8px; }
.c { width: 5px; height: 5px; }
.row { display: flex; }
.col { display: flex; flex-direction: column; }

.app { height: 100%; display: flex; flex-direction: column; }
.title, .menu { flex: none; height: 8px; display: flex; align-items: center; padding-left: 2px; white-space: nowrap; overflow: hidden; }
.title { background: linear-gradient(90deg, #808080, #b4b4b4); color: #d0d0d0; }
.menu { color: #8a8a8a; gap: 5px; }
.menu a { color: inherit; text-decoration: none; }
.title .i, .menu .i { width: 6px; height: 6px; }
.caps { display: flex; margin-left: auto; padding-right: 1px; gap: 1px; }
.caps button { width: 6px; height: 6px; line-height: 4px; font-weight: bold; color: #111; }
.tools { flex: none; width: 532px; height: 10px; padding: 0 4px; display: flex; align-items: center; justify-content: space-between; border-right: 1px solid #888; }
.tools .i { width: 8px; height: 8px; }
.tools .c { width: 4px; }
.tools .lit { background: #e8e8e8; }
.tools span.lit { display: flex; align-items: center; gap: 1px; }
.body {
  flex: 1; min-height: 0;
  display: grid; grid-template: 22px 1fr / 21px 1fr 112px;
}
.right { display: contents; }
.toolbox { grid-row: 1 / 3; height: 381px; display: flex; flex-direction: column; padding: 0 3px 0 1px; border-right: 1px solid #eee; width: 19px; }
.toolbox .grip { height: 4px; background: #888; margin-bottom: 1px; flex: none; }
.toolbox button { flex: 1; width: 14px; background: none; border: 0; min-height: 0; }
.toolbox button.on { background: #fff; }
.toolbox svg { width: 9px; height: 8px; }
.toolbox b { font: bold 8px/8px "Liberation Serif", serif; }

.info { grid-column: 2 / 4; display: flex; border-top: 1px solid #999; border-bottom: 1px solid #888; overflow: hidden; white-space: nowrap; padding-top: 1px; }
.info .grip { width: 5px; height: 18px; background: #888; margin-right: 2px; }
.info label { line-height: 5px; }
.info .low { padding-top: 3px; align-items: flex-start; }
.info button { width: 15px; height: 10px; }
.info .sel { width: 65px; }
.info .sel button { width: 16px; height: 8px; }
.info .low .sq { width: 13px; }
.info .low .wide { width: 51px; justify-content: flex-start; padding-left: 2px; }
.wide span { margin-left: auto; }
.layerpick { width: 66px; }
.mat { margin-left: 20px; }
.info .mat .wide { width: 64px; gap: 2px; padding: 0; }
.sw { width: 11px; height: 7px; background: #b0b0f4; border: 1px solid #669; }
.pens { display: flex; margin-left: 25px; }
.pens > svg { width: 14px; height: 14px; }
.pens input { width: 12px; height: 7px; }
.info .pens button { width: 13px; height: 7px; }
.blue { width: 6px; height: 4px; background: #1414f0; }
.black { width: 6px; height: 4px; background: #111; }
.cat { margin-left: 3px; width: 64px; }
.cat select { height: 8px; width: 63px; }
.linet { margin-left: 2px; }
.info .linet .wide { width: 51px; }
.info .low .small { width: 13px; }
.lw { margin-left: 24px; }
.lw input { width: 12px; height: 7px; }
.off { margin-left: 2px; }
.chk { display: flex; align-items: center; gap: 3px; }
.chk input[type=checkbox] { width: 5px; height: 5px; background: #fff; border: 1px solid #777; }
.flach { margin-left: 20px; height: 12px; width: 66px; }
.zone { gap: 2px; }
.zone .dim { color: #999; }
.zone .dim input { width: 12px; height: 5px; line-height: 3px; }

.work { display: grid; grid-template: 1fr 6px / 1fr 8px; min-height: 0; border-left: 1px solid #666; min-width: 0; }
.canvas { background: #fff; overflow: hidden; min-height: 0; min-width: 0; }
.vscroll { background: #e4e4e4; display: flex; flex-direction: column; }
.vscroll button { height: 7px; }
.vscroll .thumb { flex: none; height: 110px; margin: 201px 0 auto; background: #c4c4c4; border: 1px solid; border-color: #eee #777 #777 #eee; }
.zoombar { grid-column: 1 / 3; display: flex; background: #e0e0e0; overflow: hidden; }
.zb { display: flex; width: 207px; background: #c0c0c0; }
.zb button { width: 10px; height: 6px; flex: none; }
.zb .n { flex: 1; text-align: center; line-height: 6px; border-right: 1px solid #999; }
.hs { flex: 1; display: flex; justify-content: flex-end; padding-right: 8px; }
.hthumb { width: 118px; background: #c0c0c0; border-bottom: 1px solid #666; border-top: 1px solid #aaa; }
.hs button { width: 7px; }

.navi { border-left: 1px solid #777; min-width: 0; overflow: hidden; white-space: nowrap; }
.navi h2, .fav h2, .mini h2 { display: flex; justify-content: space-between; background: #858585; color: #ccc; height: 6px; padding: 0 2px; line-height: 6px; }
.navi h2, .fav h2 { font-weight: bold; }
.navi .faint { color: #b4b4b4; font-weight: normal; }
.navi em { font-style: normal; color: #ddd; }
.tabs { height: 12px; display: flex; align-items: center; padding: 0 1px 0 2px; }
.tabs .i:first-child { margin-right: auto; }
.tabs button { width: 12px; height: 10px; }
.treebox { background: #fff; height: 159px; border-top: 1px solid #777; padding-left: 3px; overflow: hidden; }
.tree { height: 134px; display: flex; flex-direction: column; font-size: 4px; color: #000; }
.tree li { flex: 1; min-height: 0; display: flex; align-items: center; gap: 2px; }
.tree .l1 { padding-left: 9px; }
.tree .l2 { padding-left: 22px; }
.tree svg { width: 7px; height: 6px; }
.tree s { width: 4px; height: 4px; line-height: 3px; text-decoration: none; color: #777; border: 1px dotted #bbb; }
.tree s:empty { border-width: 0 0 1px; }
.tree b { outline: 1px solid #337; line-height: 5px; }
.nscroll { height: 7px; display: flex; }
.nscroll button { width: 7px; }
.nscroll div { flex: 1; border: 1px solid; border-color: #eee #777 #777 #eee; }
.acts { display: flex; justify-content: flex-end; padding-top: 2px; height: 14px; }
.acts button { width: 9px; height: 9px; }
.acts .del { color: #d22; font-size: 8px; }
.desc { background: #dcdcdc; height: 8px; line-height: 8px; padding-left: 4px; border-top: 1px solid #aaa; }
.field { display: flex; align-items: center; height: 8px; }
.field label { width: 30px; display: flex; }
.field .i { width: 6px; height: 6px; }
.field input { flex: 1; height: 7px; }
.settings { width: calc(100% - 10px); height: 10px; margin: 1px 4px 3px 5px; display: flex; }
.sun { height: 95px; padding-top: 11px; color: #999; }
.sun .row { height: 10px; margin-bottom: 1px; }
.sun button { width: 13px; height: 10px; color: #666; font-size: 6px; }
.sun .flat { width: 9px; border-color: #c0c0c0; }
.sun .wide { flex: 1; justify-content: flex-start; padding-left: 2px; color: #999; font-size: 5px; }
.sun label { display: block; margin-top: 2px; height: 6px; }
.sun .four, .sun .sl { padding-left: 12px; }
.sun .four { margin-top: 2px; }
.sun .sl { gap: 4px; }
.sun .sl .nar { width: 5px; }
.sun input { flex: 1; min-width: 0; height: 10px; border: 0; background: linear-gradient(#555, #555) 0 3px / 100% 1px no-repeat, repeating-linear-gradient(90deg, #888 0 1px, transparent 1px 10px) 0 8px / 100% 2px no-repeat; }
.sun input::-webkit-slider-thumb { appearance: none; width: 3px; height: 7px; background: #c0c0c0; border: 1px solid #555; margin-top: -3px; }
.quick { height: 43px; display: flex; flex-direction: column; }
.quick li { flex: 1; min-height: 0; display: grid; grid-template-columns: 6px 1fr; align-items: stretch; }
.quick button { justify-content: space-between; padding: 0 1px; line-height: 5px; }

.coords { flex: none; height: 13px; border-top: 1px solid #eee; border-bottom: 1px solid #eee; padding-left: 21px; display: flex; gap: 1px; align-items: center; white-space: nowrap; overflow: hidden; }
.coords button { width: 12px; height: 10px; }
.coords .sm { width: 6px; }
.coords .tiny { width: 6px; height: 5px; align-self: flex-start; margin-right: 3px; }
.coords .lab { width: 22px; }
.coords .lab2 { width: 33px; }
.xy { width: 50px; background: #fff; height: 11px; line-height: 5px; overflow: hidden; display: flex; flex-direction: column; }
.xy label { display: grid; grid-template-columns: 12px 1fr; background: linear-gradient(90deg, #c0c0c0 11px, #fff 11px); }
.xy input { border: 0; height: 5px; width: 100%; }
.org { width: 53px; margin-right: 4px; }
.org span { background: #c0c0c0; height: 6px; }
.org ~ button { flex: none; margin-left: 1px; }
.half { width: 24px; line-height: 5px; color: #555; }
.status { flex: none; height: 9px; }
.task { flex: none; height: 12px; border-top: 1px solid #eee; display: flex; align-items: center; gap: 2px; padding-left: 2px; }
.task button { height: 10px; gap: 1px; justify-content: flex-start; }
.task .start { width: 19px; }
.task .start .i { width: 5px; }
.task .q { width: 7px; height: 7px; }
.task .t { width: 62px; font-size: 4px; }
.tray { margin-left: auto; width: 46px; height: 10px; line-height: 9px; border: 1px solid #999; border-color: #888 #eee #eee #888; padding-left: 2px; margin-right: 1px; white-space: nowrap; display: flex; justify-content: space-between; padding-right: 2px; }
.tray b { color: #d11; }
.tray u { color: #e77; text-decoration: none; }

.fav { position: absolute; left: 517px; top: 55px; width: 125px; height: 144px; background: #c0c0c0; border: 1px solid #888; border-right: 2px solid #777; border-bottom-width: 2px; padding: 1px; }
.fav h2 button, .mini h2 button { width: 6px; height: 6px; color: #111; }
.fav .list { display: flex; margin-top: 2px; height: 115px; }
.fav table { flex: 1; min-width: 0; border-spacing: 0; background: #fff; overflow: hidden; display: block; }
.fav thead, .fav tbody { display: block; }
.fav tr { display: flex; height: 7px; border-bottom: 1px solid #d8d8d8; white-space: nowrap; overflow: hidden; }
.fav tbody { display: flex; flex-direction: column; height: 108px; font-size: 4px; color: #000; }
.fav tbody tr { flex: 1; min-height: 0; }
.fav th { flex: none; text-align: left; font-weight: normal; background: #c0c0c0; padding: 0; width: 19px; line-height: 6px; border-bottom: 1px solid #666; }
.fav th + th { flex: 1; }
.fav td { flex: none; padding: 0; width: 19px; line-height: 6px; }
.fav td + td { width: auto; }
.fav td svg { width: 6px; height: 6px; margin-left: 1px; }
.fscroll { width: 7px; display: flex; flex-direction: column; background: #e0e0e0; }
.fscroll button { height: 7px; flex: none; }
.fscroll div { height: 20px; background: #c0c0c0; border: 1px solid; border-color: #eee #666 #666 #eee; margin-bottom: auto; }

.mini { position: absolute; left: 24px; top: 360px; width: 68px; height: 78px; background: #c0c0c0; border: 1px solid #888; border-right-color: #666; border-bottom-color: #666; padding: 1px 2px; }
.mini h2 { color: #aaa; overflow: hidden; white-space: nowrap; }
.mh { height: 10px; align-items: center; gap: 3px; padding: 0 1px; white-space: nowrap; }
.mh .i { width: 6px; height: 6px; }
.mh button { margin-left: auto; width: 14px; height: 8px; }
.mp { width: 60px; height: 46px; margin-left: 1px; border-left: 1px solid #777; border-top: 1px solid #777; }
.mf { height: 11px; align-items: center; gap: 4px; padding-left: 1px; }
.mf button { width: 7px; height: 7px; }
.mf button:last-child { margin-left: auto; margin-right: 4px; }

.dialog { position: absolute; left: 297px; top: 140px; width: 298px; height: 260px; background: #c0c0c0; border: 1px solid; border-color: #e4e4e4 #444 #444 #e4e4e4; }
.dialog h1 { height: 8px; display: flex; align-items: center; gap: 1px; padding: 0 2px; background: linear-gradient(90deg, #06207c, #1078cc); color: #fff; font-weight: bold; }
.dialog h1 .i { width: 6px; height: 6px; }
.dialog h1 span { margin-right: auto; }
.dialog h1 button { width: 6px; height: 6px; color: #111; font-weight: bold; }
.dbody { display: flex; height: 250px; padding: 2px 2px 0 1px; }
.dtabs { width: 21px; display: flex; flex-direction: column; }
.dtabs button { height: 20px; }
.dtabs svg { width: 18px; height: 18px; }
.groups { width: 126px; padding: 3px 0 0 4px; }
fieldset { margin: 0; border: 1px solid #dedede; padding: 0 0 0 7px; width: 120px; box-shadow: inset 1px 1px #a0a0a0; min-width: 0; }
legend { padding: 0 2px; margin-left: -6px; line-height: 6px; background: #c0c0c0; }
fieldset div { height: 11px; display: flex; align-items: center; }
fieldset div > svg { width: 13px; height: 10px; margin-right: 5px; }
fieldset div button { width: 8px; height: 8px; margin-right: 4px; background: #e8e8e8; }
fieldset div button svg { width: 5px; height: 5px; }
fieldset input { width: 42px; height: 8px; }
.geo { height: 76px; }
.lauf { height: 131px; }
.lr { width: 14px; height: 12px; margin: 1px 0 0 30px; font-size: 6px; }
.bl { display: grid; grid-template-columns: 49px 49px; grid-template-rows: 10px 10px; gap: 4px 6px; margin: 10px 0 0 -24px; }
.bl .w { grid-column: 2; }
.dright { flex: 1; padding: 3px 0 0 1px; min-width: 0; }
.preview { width: 141px; height: 111px; background: #fff; border: 1px solid; border-color: #777 #eee #eee #777; }
.lower { display: flex; height: 103px; }
.step { width: 78px; padding-top: 3px; }
.step .hd { display: block; height: 8px; }
.step label { display: block; height: 18px; padding-top: 2px; }
.step label input, .step output { display: block; width: 35px; height: 8px; margin-left: 35px; }
.step output { line-height: 8px; }
.sr { display: flex; align-items: center; height: 9px; margin-bottom: 2px; }
.sr svg { width: 11px; height: 8px; }
.sr button { width: 8px; height: 8px; margin: 0 3px 0 7px; }
.sr button svg { width: 5px; height: 5px; }
.sr input { width: 41px; height: 8px; }
.sp { padding-top: 4px; }
.spic { width: 62px; height: 61px; background: #fff; border: 1px solid; border-color: #777 #eee #eee #777; }
.sp .row { margin-top: 11px; }
.sp .row button { width: 16px; height: 11px; }
.sp .row input { width: 27px; height: 9px; margin: 1px 0 0 3px; }
.br { display: flex; justify-content: flex-end; gap: 3px; margin-top: 16px; }
.br button { width: 37px; height: 10px; }
.br .ok { width: 29px; border-color: #555; box-shadow: inset 1px 1px #eee; }

.note { position: absolute; left: 303px; top: 67px; font-size: 18px; line-height: 22px; color: #000; white-space: nowrap; }
.arrow { position: absolute; left: 407px; top: 109px; width: 90px; height: 102px; }
```
